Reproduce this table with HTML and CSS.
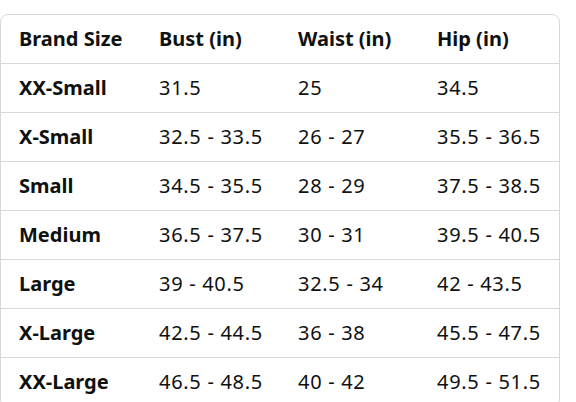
FILE: index.html
```html
<!DOCTYPE html>
<html>
<head>
<meta charset="utf-8">
<link rel="stylesheet" href="styles.css">
</head>
<body>
<div class="card">
<table class="chart">
<thead>
<tr><th>Brand Size</th><th>Bust (in)</th><th>Waist (in)</th><th>Hip (in)</th></tr>
</thead>
<tbody>
<tr><th>XX-Small</th><td>31.5</td><td>25</td><td>34.5</td></tr>
<tr><th>X-Small</th><td>32.5 - 33.5</td><td>26 - 27</td><td>35.5 - 36.5</td></tr>
<tr><th>Small</th><td>34.5 - 35.5</td><td>28 - 29</td><td>37.5 - 38.5</td></tr>
<tr><th>Medium</th><td>36.5 - 37.5</td><td>30 - 31</td><td>39.5 - 40.5</td></tr>
<tr><th>Large</th><td>39 - 40.5</td><td>32.5 - 34</td><td>42 - 43.5</td></tr>
<tr><th>X-Large</th><td>42.5 - 44.5</td><td>36 - 38</td><td>45.5 - 47.5</td></tr>
<tr><th>XX-Large</th><td>46.5 - 48.5</td><td>40 - 42</td><td>49.5 - 51.5</td></tr>
</tbody>
</table>
</div>
</body>
</html>
```
FILE: styles.css
```css
html, body {
  margin: 0;
  padding: 0;
  background: #ffffff;
}
body {
  padding-top: 14px;
  font-family: "Noto Sans", "Open Sans", sans-serif;
  color: #0f1111;
}
.card {
  width: 558px;
  border: 1px solid #d5d9d9;
  border-radius: 8px;
  overflow: hidden;
}
.chart {
  border-collapse: collapse;
  width: 558px;
  table-layout: fixed;
}
.chart th, .chart td {
  height: 48px;
  padding: 0 0 0 18px;
  text-align: left;
  vertical-align: middle;
  font-size: 20px;
  line-height: 24px;
  border-bottom: 1px solid #d5d9d9;
  white-space: nowrap;
}
.chart th { font-weight: 700; letter-spacing: 0; }
.chart td { font-weight: 400; letter-spacing: 0.7px; }
.chart th:nth-child(1) { width: 122px; }
.chart th:nth-child(2), .chart td:nth-child(2) { width: 121px; }
.chart th:nth-child(3), .chart td:nth-child(3) { width: 121px; }
```
